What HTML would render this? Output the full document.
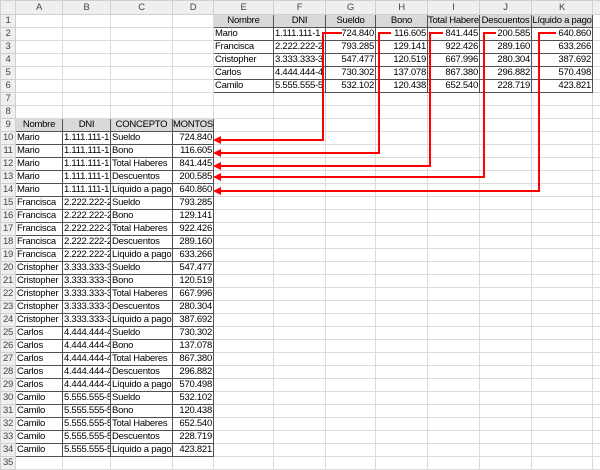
<!DOCTYPE html>
<html><head><meta charset="utf-8"><style>
body{margin:0;width:600px;height:467px;overflow:hidden;background:#fff;font-family:"Liberation Sans",sans-serif;font-size:9.5px;letter-spacing:-0.25px;color:#000}
table{border-collapse:collapse;table-layout:fixed;position:absolute;left:0;top:0;width:600px}
td{height:12px;padding:0 1px;border:1px solid #dcdcdc;white-space:nowrap;overflow:hidden;line-height:12px;box-sizing:border-box}
tr.h td{height:14px;background:#efefef;color:#444;text-align:center;border-color:#cfcfcf}
td.r0{background:#efefef;color:#444;text-align:center;padding:0;border-color:#cfcfcf}
td.b{border:1px solid #505050}
td.g{background:#d9d9d9;text-align:center;border:1px solid #505050}
td.n{text-align:right}
svg{position:absolute;left:0;top:0}
</style></head><body>
<table>
<colgroup><col style="width:15px"><col style="width:47px"><col style="width:48px"><col style="width:62px"><col style="width:41px"><col style="width:60px"><col style="width:52px"><col style="width:50px"><col style="width:52px"><col style="width:52px"><col style="width:52px"><col style="width:61px"><col style="width:8px"></colgroup>
<tr class="h"><td></td><td>A</td><td>B</td><td>C</td><td>D</td><td>E</td><td>F</td><td>G</td><td>H</td><td>I</td><td>J</td><td>K</td><td></td></tr>
<tr><td class="r0">1</td><td></td><td></td><td></td><td></td><td class="g">Nombre</td><td class="g">DNI</td><td class="g">Sueldo</td><td class="g">Bono</td><td class="g" style="padding:0">Total Haberes</td><td class="g" style="padding:0">Descuentos</td><td class="g" style="padding:0">Líquido a pago</td><td></td></tr>
<tr><td class="r0">2</td><td></td><td></td><td></td><td></td><td class="b">Mario</td><td class="b">1.111.111-1</td><td class="b n">724.840</td><td class="b n">116.605</td><td class="b n">841.445</td><td class="b n">200.585</td><td class="b n">640.860</td><td></td></tr>
<tr><td class="r0">3</td><td></td><td></td><td></td><td></td><td class="b">Francisca</td><td class="b">2.222.222-2</td><td class="b n">793.285</td><td class="b n">129.141</td><td class="b n">922.426</td><td class="b n">289.160</td><td class="b n">633.266</td><td></td></tr>
<tr><td class="r0">4</td><td></td><td></td><td></td><td></td><td class="b">Cristopher</td><td class="b">3.333.333-3</td><td class="b n">547.477</td><td class="b n">120.519</td><td class="b n">667.996</td><td class="b n">280.304</td><td class="b n">387.692</td><td></td></tr>
<tr><td class="r0">5</td><td></td><td></td><td></td><td></td><td class="b">Carlos</td><td class="b">4.444.444-4</td><td class="b n">730.302</td><td class="b n">137.078</td><td class="b n">867.380</td><td class="b n">296.882</td><td class="b n">570.498</td><td></td></tr>
<tr><td class="r0">6</td><td></td><td></td><td></td><td></td><td class="b">Camilo</td><td class="b">5.555.555-5</td><td class="b n">532.102</td><td class="b n">120.438</td><td class="b n">652.540</td><td class="b n">228.719</td><td class="b n">423.821</td><td></td></tr>
<tr><td class="r0">7</td><td></td><td></td><td></td><td></td><td></td><td></td><td></td><td></td><td></td><td></td><td></td><td></td></tr>
<tr><td class="r0">8</td><td></td><td></td><td></td><td></td><td></td><td></td><td></td><td></td><td></td><td></td><td></td><td></td></tr>
<tr><td class="r0">9</td><td class="g">Nombre</td><td class="g">DNI</td><td class="g">CONCEPTO</td><td class="g" style="padding:0">MONTOS</td><td></td><td></td><td></td><td></td><td></td><td></td><td></td><td></td></tr>
<tr><td class="r0">10</td><td class="b">Mario</td><td class="b">1.111.111-1</td><td class="b">Sueldo</td><td class="b n">724.840</td><td></td><td></td><td></td><td></td><td></td><td></td><td></td><td></td></tr>
<tr><td class="r0">11</td><td class="b">Mario</td><td class="b">1.111.111-1</td><td class="b">Bono</td><td class="b n">116.605</td><td></td><td></td><td></td><td></td><td></td><td></td><td></td><td></td></tr>
<tr><td class="r0">12</td><td class="b">Mario</td><td class="b">1.111.111-1</td><td class="b">Total Haberes</td><td class="b n">841.445</td><td></td><td></td><td></td><td></td><td></td><td></td><td></td><td></td></tr>
<tr><td class="r0">13</td><td class="b">Mario</td><td class="b">1.111.111-1</td><td class="b">Descuentos</td><td class="b n">200.585</td><td></td><td></td><td></td><td></td><td></td><td></td><td></td><td></td></tr>
<tr><td class="r0">14</td><td class="b">Mario</td><td class="b">1.111.111-1</td><td class="b">Líquido a pago</td><td class="b n">640.860</td><td></td><td></td><td></td><td></td><td></td><td></td><td></td><td></td></tr>
<tr><td class="r0">15</td><td class="b">Francisca</td><td class="b">2.222.222-2</td><td class="b">Sueldo</td><td class="b n">793.285</td><td></td><td></td><td></td><td></td><td></td><td></td><td></td><td></td></tr>
<tr><td class="r0">16</td><td class="b">Francisca</td><td class="b">2.222.222-2</td><td class="b">Bono</td><td class="b n">129.141</td><td></td><td></td><td></td><td></td><td></td><td></td><td></td><td></td></tr>
<tr><td class="r0">17</td><td class="b">Francisca</td><td class="b">2.222.222-2</td><td class="b">Total Haberes</td><td class="b n">922.426</td><td></td><td></td><td></td><td></td><td></td><td></td><td></td><td></td></tr>
<tr><td class="r0">18</td><td class="b">Francisca</td><td class="b">2.222.222-2</td><td class="b">Descuentos</td><td class="b n">289.160</td><td></td><td></td><td></td><td></td><td></td><td></td><td></td><td></td></tr>
<tr><td class="r0">19</td><td class="b">Francisca</td><td class="b">2.222.222-2</td><td class="b">Líquido a pago</td><td class="b n">633.266</td><td></td><td></td><td></td><td></td><td></td><td></td><td></td><td></td></tr>
<tr><td class="r0">20</td><td class="b">Cristopher</td><td class="b">3.333.333-3</td><td class="b">Sueldo</td><td class="b n">547.477</td><td></td><td></td><td></td><td></td><td></td><td></td><td></td><td></td></tr>
<tr><td class="r0">21</td><td class="b">Cristopher</td><td class="b">3.333.333-3</td><td class="b">Bono</td><td class="b n">120.519</td><td></td><td></td><td></td><td></td><td></td><td></td><td></td><td></td></tr>
<tr><td class="r0">22</td><td class="b">Cristopher</td><td class="b">3.333.333-3</td><td class="b">Total Haberes</td><td class="b n">667.996</td><td></td><td></td><td></td><td></td><td></td><td></td><td></td><td></td></tr>
<tr><td class="r0">23</td><td class="b">Cristopher</td><td class="b">3.333.333-3</td><td class="b">Descuentos</td><td class="b n">280.304</td><td></td><td></td><td></td><td></td><td></td><td></td><td></td><td></td></tr>
<tr><td class="r0">24</td><td class="b">Cristopher</td><td class="b">3.333.333-3</td><td class="b">Líquido a pago</td><td class="b n">387.692</td><td></td><td></td><td></td><td></td><td></td><td></td><td></td><td></td></tr>
<tr><td class="r0">25</td><td class="b">Carlos</td><td class="b">4.444.444-4</td><td class="b">Sueldo</td><td class="b n">730.302</td><td></td><td></td><td></td><td></td><td></td><td></td><td></td><td></td></tr>
<tr><td class="r0">26</td><td class="b">Carlos</td><td class="b">4.444.444-4</td><td class="b">Bono</td><td class="b n">137.078</td><td></td><td></td><td></td><td></td><td></td><td></td><td></td><td></td></tr>
<tr><td class="r0">27</td><td class="b">Carlos</td><td class="b">4.444.444-4</td><td class="b">Total Haberes</td><td class="b n">867.380</td><td></td><td></td><td></td><td></td><td></td><td></td><td></td><td></td></tr>
<tr><td class="r0">28</td><td class="b">Carlos</td><td class="b">4.444.444-4</td><td class="b">Descuentos</td><td class="b n">296.882</td><td></td><td></td><td></td><td></td><td></td><td></td><td></td><td></td></tr>
<tr><td class="r0">29</td><td class="b">Carlos</td><td class="b">4.444.444-4</td><td class="b">Líquido a pago</td><td class="b n">570.498</td><td></td><td></td><td></td><td></td><td></td><td></td><td></td><td></td></tr>
<tr><td class="r0">30</td><td class="b">Camilo</td><td class="b">5.555.555-5</td><td class="b">Sueldo</td><td class="b n">532.102</td><td></td><td></td><td></td><td></td><td></td><td></td><td></td><td></td></tr>
<tr><td class="r0">31</td><td class="b">Camilo</td><td class="b">5.555.555-5</td><td class="b">Bono</td><td class="b n">120.438</td><td></td><td></td><td></td><td></td><td></td><td></td><td></td><td></td></tr>
<tr><td class="r0">32</td><td class="b">Camilo</td><td class="b">5.555.555-5</td><td class="b">Total Haberes</td><td class="b n">652.540</td><td></td><td></td><td></td><td></td><td></td><td></td><td></td><td></td></tr>
<tr><td class="r0">33</td><td class="b">Camilo</td><td class="b">5.555.555-5</td><td class="b">Descuentos</td><td class="b n">228.719</td><td></td><td></td><td></td><td></td><td></td><td></td><td></td><td></td></tr>
<tr><td class="r0">34</td><td class="b">Camilo</td><td class="b">5.555.555-5</td><td class="b">Líquido a pago</td><td class="b n">423.821</td><td></td><td></td><td></td><td></td><td></td><td></td><td></td><td></td></tr>
<tr><td class="r0">35</td><td></td><td></td><td></td><td></td><td></td><td></td><td></td><td></td><td></td><td></td><td></td><td></td></tr>
</table>
<svg width="600" height="467" viewBox="0 0 600 467">
<g fill="none" stroke="#f00" stroke-width="2">
<polyline points="342,33 323,33 323,140 220,140"/>
<polyline points="391,33 379,33 379,153 220,153"/>
<polyline points="443,33 430,33 430,166 220,166"/>
<polyline points="496,33 484,33 484,177 220,177"/>
<polyline points="556,33 539,33 539,191 220,191"/>
</g>
<g fill="#f00">
<polygon points="213,140 221,136 221,144"/>
<polygon points="213,153 221,149 221,157"/>
<polygon points="213,166 221,162 221,170"/>
<polygon points="213,177 221,173 221,181"/>
<polygon points="213,191 221,187 221,195"/>
</g>
</svg>
</body></html>
